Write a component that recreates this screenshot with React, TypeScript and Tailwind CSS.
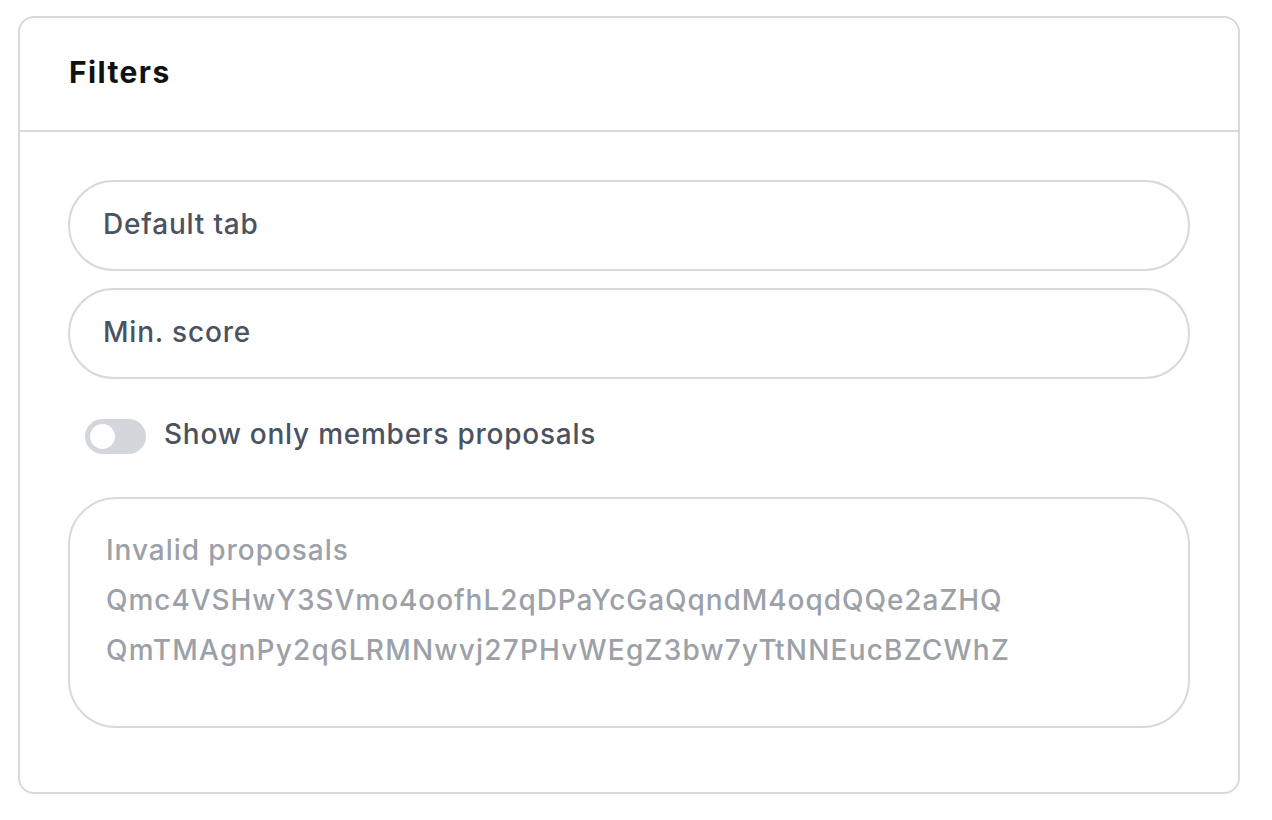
import React from "react";

export default function App() {
  return (
    <div className="min-h-[820px] w-[1272px] bg-white pt-4 pl-[18px]" style={{ fontFamily: "Inter, 'Noto Sans', sans-serif" }}>
      <div className="w-[1222px] rounded-2xl border-2 border-[#d6d9de] bg-white">
        <div className="flex h-[114px] items-center border-b-2 border-[#d6d9de] pl-[49px] pb-[3px]">
          <h2 className="text-[30px] font-bold tracking-[1.4px] text-[#111111]">Filters</h2>
        </div>
        <div className="flex flex-col px-[48px] pt-[48px] pb-[64px]">
          <div className="flex h-[91px] items-center rounded-full border-2 border-[#d6d9de] pl-[33px] pb-[4px] text-[28px] font-medium tracking-[0.8px] text-[#4b535f]">
            Default tab
          </div>
          <div className="mt-[17px] flex h-[91px] items-center rounded-full border-2 border-[#d6d9de] pl-[33px] pb-[4px] text-[28px] font-medium tracking-[0.8px] text-[#4b535f]">
            Min. score
          </div>
          <div className="mt-[38px] flex items-center pl-[17px]">
            <div className="flex h-[35px] w-[61px] items-center rounded-full bg-[#d3d6db] pl-[5px]">
              <div className="h-[25px] w-[25px] rounded-full bg-white" />
            </div>
            <span className="ml-[18px] -mt-[4px] text-[28px] font-medium tracking-[0.75px] text-[#4b535f]">Show only members proposals</span>
          </div>
          <div className="mt-[42px] h-[231px] rounded-[48px] border-2 border-[#d6d9de] pl-[36px] pt-[26px] text-[28px] font-medium leading-[50px] tracking-[0.95px] text-[#9ca1a8]">
            <div>Invalid proposals</div>
            <div>Qmc4VSHwY3SVmo4oofhL2qDPaYcGaQqndM4oqdQQe2aZHQ</div>
            <div className="tracking-[1.2px]">QmTMAgnPy2q6LRMNwvj27PHvWEgZ3bw7yTtNNEucBZCWhZ</div>
          </div>
        </div>
      </div>
    </div>
  );
}
